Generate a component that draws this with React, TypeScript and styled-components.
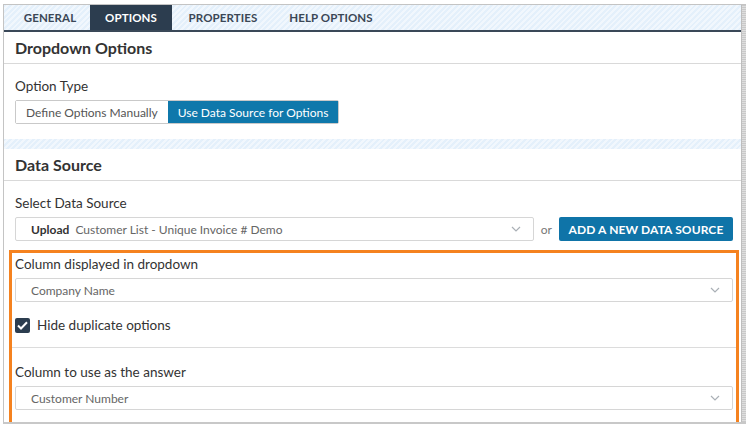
import React from "react";
import styled, { createGlobalStyle } from "styled-components";

const Global = createGlobalStyle`
  html, body { margin: 0; padding: 0; background: #fff; }
  body { font-family: Lato, "Open Sans", Arial, sans-serif; color: #333; }
  * { box-sizing: border-box; }
`;

const hatch = `repeating-linear-gradient(135deg, #e4f0fb 0px, #e4f0fb 2px, #f1f7fd 2px, #f1f7fd 4px)`;

const Page = styled.div`
  padding: 4px 0 0 3px;
  width: 750px;
  height: 429px;
`;

const Frame = styled.div`
  width: 743px;
  height: 420px;
  border-left: 1px solid #c4c4c4;
  border-top: 1px solid #c4c4c4;
  border-bottom: 2px solid #c8c8c8;
  display: flex;
  overflow: hidden;
`;

const Main = styled.div`
  flex: 1;
  background: #fff;
  min-width: 0;
`;

const ScrollEdge = styled.div`
  width: 5px;
  flex-shrink: 0;
  background: repeating-linear-gradient(180deg, #c9c9c9 0px, #c9c9c9 1px, #dedede 1px, #dedede 2px);
  border-left: 1px solid #bdbdbd;
`;

const TabBar = styled.div`
  display: flex;
  height: 27px;
  padding-left: 6px;
  background: ${hatch};
  border-bottom: 2px solid #3a4858;
`;

const Tab = styled.div<{ $active?: boolean; $w: number }>`
  width: ${(p) => p.$w}px;
  display: flex;
  align-items: center;
  justify-content: center;
  font-size: 11.5px;
  font-weight: 700;
  letter-spacing: 0.1px;
  color: ${(p) => (p.$active ? "#fff" : "#3b4756")};
  background: ${(p) => (p.$active ? "#2c3d4f" : "transparent")};
`;

const SectionHeader = styled.div`
  height: 32px;
  display: flex;
  align-items: center;
  padding-left: 11px;
  border-bottom: 1px solid #d9d9d9;
  font-size: 16px;
  font-weight: 700;
  color: #333;
`;

const SectionBody = styled.div`
  padding: 13px 8px 15px 11px;
  display: flex;
  flex-direction: column;
`;

const Band = styled.div`
  height: 10px;
  background: ${hatch};
`;

const Label = styled.div`
  font-size: 13.5px;
  color: #333;
  height: 18px;
  line-height: 18px;
  margin-bottom: 5px;
`;

const Segmented = styled.div`
  display: flex;
  align-self: flex-start;
  height: 24px;
  border: 1px solid #c9c9c9;
  border-radius: 2px;
`;

const Segment = styled.div<{ $active?: boolean }>`
  display: flex;
  align-items: center;
  padding: 0 10px;
  font-size: 12px;
  color: ${(p) => (p.$active ? "#fff" : "#555")};
  background: ${(p) => (p.$active ? "#0f78ab" : "#fff")};
`;

const Row = styled.div`
  display: flex;
  align-items: center;
  gap: 7px;
`;

const SelectBox = styled.div`
  flex: 1;
  height: 24px;
  border: 1px solid #d6d6d6;
  border-radius: 2px;
  display: flex;
  align-items: center;
  padding: 0 12px 0 15px;
  font-size: 12px;
  color: #666;
  background: #fff;
`;

const SelectText = styled.span`
  flex: 1;
  b { color: #333; font-weight: 700; margin-right: 3px; }
`;

const Or = styled.span`
  font-size: 12px;
  color: #777;
`;

const PrimaryButton = styled.div`
  width: 174px;
  height: 24px;
  background: #0f74a8;
  border-radius: 2px;
  color: #fff;
  font-size: 12px;
  font-weight: 700;
  display: flex;
  align-items: center;
  justify-content: center;
  letter-spacing: 0.1px;
`;

const Highlight = styled.div`
  margin: 9px -6px 0 -6px;
  border: 3px solid #f5821f;
  border-bottom: none;
  padding: 2px 3px 20px 3px;
  display: flex;
  flex-direction: column;
`;

const CheckRow = styled.div`
  display: flex;
  align-items: center;
  gap: 7px;
  margin-top: 15px;
  font-size: 13.5px;
  color: #333;
  height: 16px;
`;

const CheckBox = styled.div`
  width: 15px;
  height: 15px;
  border-radius: 2px;
  background: #2c3d4f;
  display: flex;
  align-items: center;
  justify-content: center;
`;

const Divider = styled.div`
  height: 1px;
  background: #dcdcdc;
  margin: 14px -3px 15px -3px;
`;

const Chevron = () => (
  <svg width="10" height="6" viewBox="0 0 10 6" fill="none">
    <path d="M1 1l4 4 4-4" stroke="#aab0b6" strokeWidth="1.2" />
  </svg>
);

const Select = ({ children }: { children: React.ReactNode }) => (
  <SelectBox>
    <SelectText>{children}</SelectText>
    <Chevron />
  </SelectBox>
);

export default function App() {
  return (
    <Page>
      <Global />
      <Frame>
        <Main>
          <TabBar>
            <Tab $w={80}>GENERAL</Tab>
            <Tab $w={82} $active>OPTIONS</Tab>
            <Tab $w={102}>PROPERTIES</Tab>
            <Tab $w={114}>HELP OPTIONS</Tab>
          </TabBar>
          <SectionHeader>Dropdown Options</SectionHeader>
          <SectionBody>
            <Label>Option Type</Label>
            <Segmented>
              <Segment>Define Options Manually</Segment>
              <Segment $active>Use Data Source for Options</Segment>
            </Segmented>
          </SectionBody>
          <Band />
          <SectionHeader>Data Source</SectionHeader>
          <SectionBody>
            <Label>Select Data Source</Label>
            <Row>
              <Select>
                <b>Upload</b> Customer List - Unique Invoice # Demo
              </Select>
              <Or>or</Or>
              <PrimaryButton>ADD A NEW DATA SOURCE</PrimaryButton>
            </Row>
            <Highlight>
              <Label>Column displayed in dropdown</Label>
              <Row>
                <Select>Company Name</Select>
              </Row>
              <CheckRow>
                <CheckBox>
                  <svg width="11" height="9" viewBox="0 0 11 9" fill="none">
                    <path d="M1 4.5l3 3L10 1.2" stroke="#fff" strokeWidth="2" />
                  </svg>
                </CheckBox>
                Hide duplicate options
              </CheckRow>
              <Divider />
              <Label>Column to use as the answer</Label>
              <Row>
                <Select>Customer Number</Select>
              </Row>
            </Highlight>
          </SectionBody>
        </Main>
        <ScrollEdge />
      </Frame>
    </Page>
  );
}
